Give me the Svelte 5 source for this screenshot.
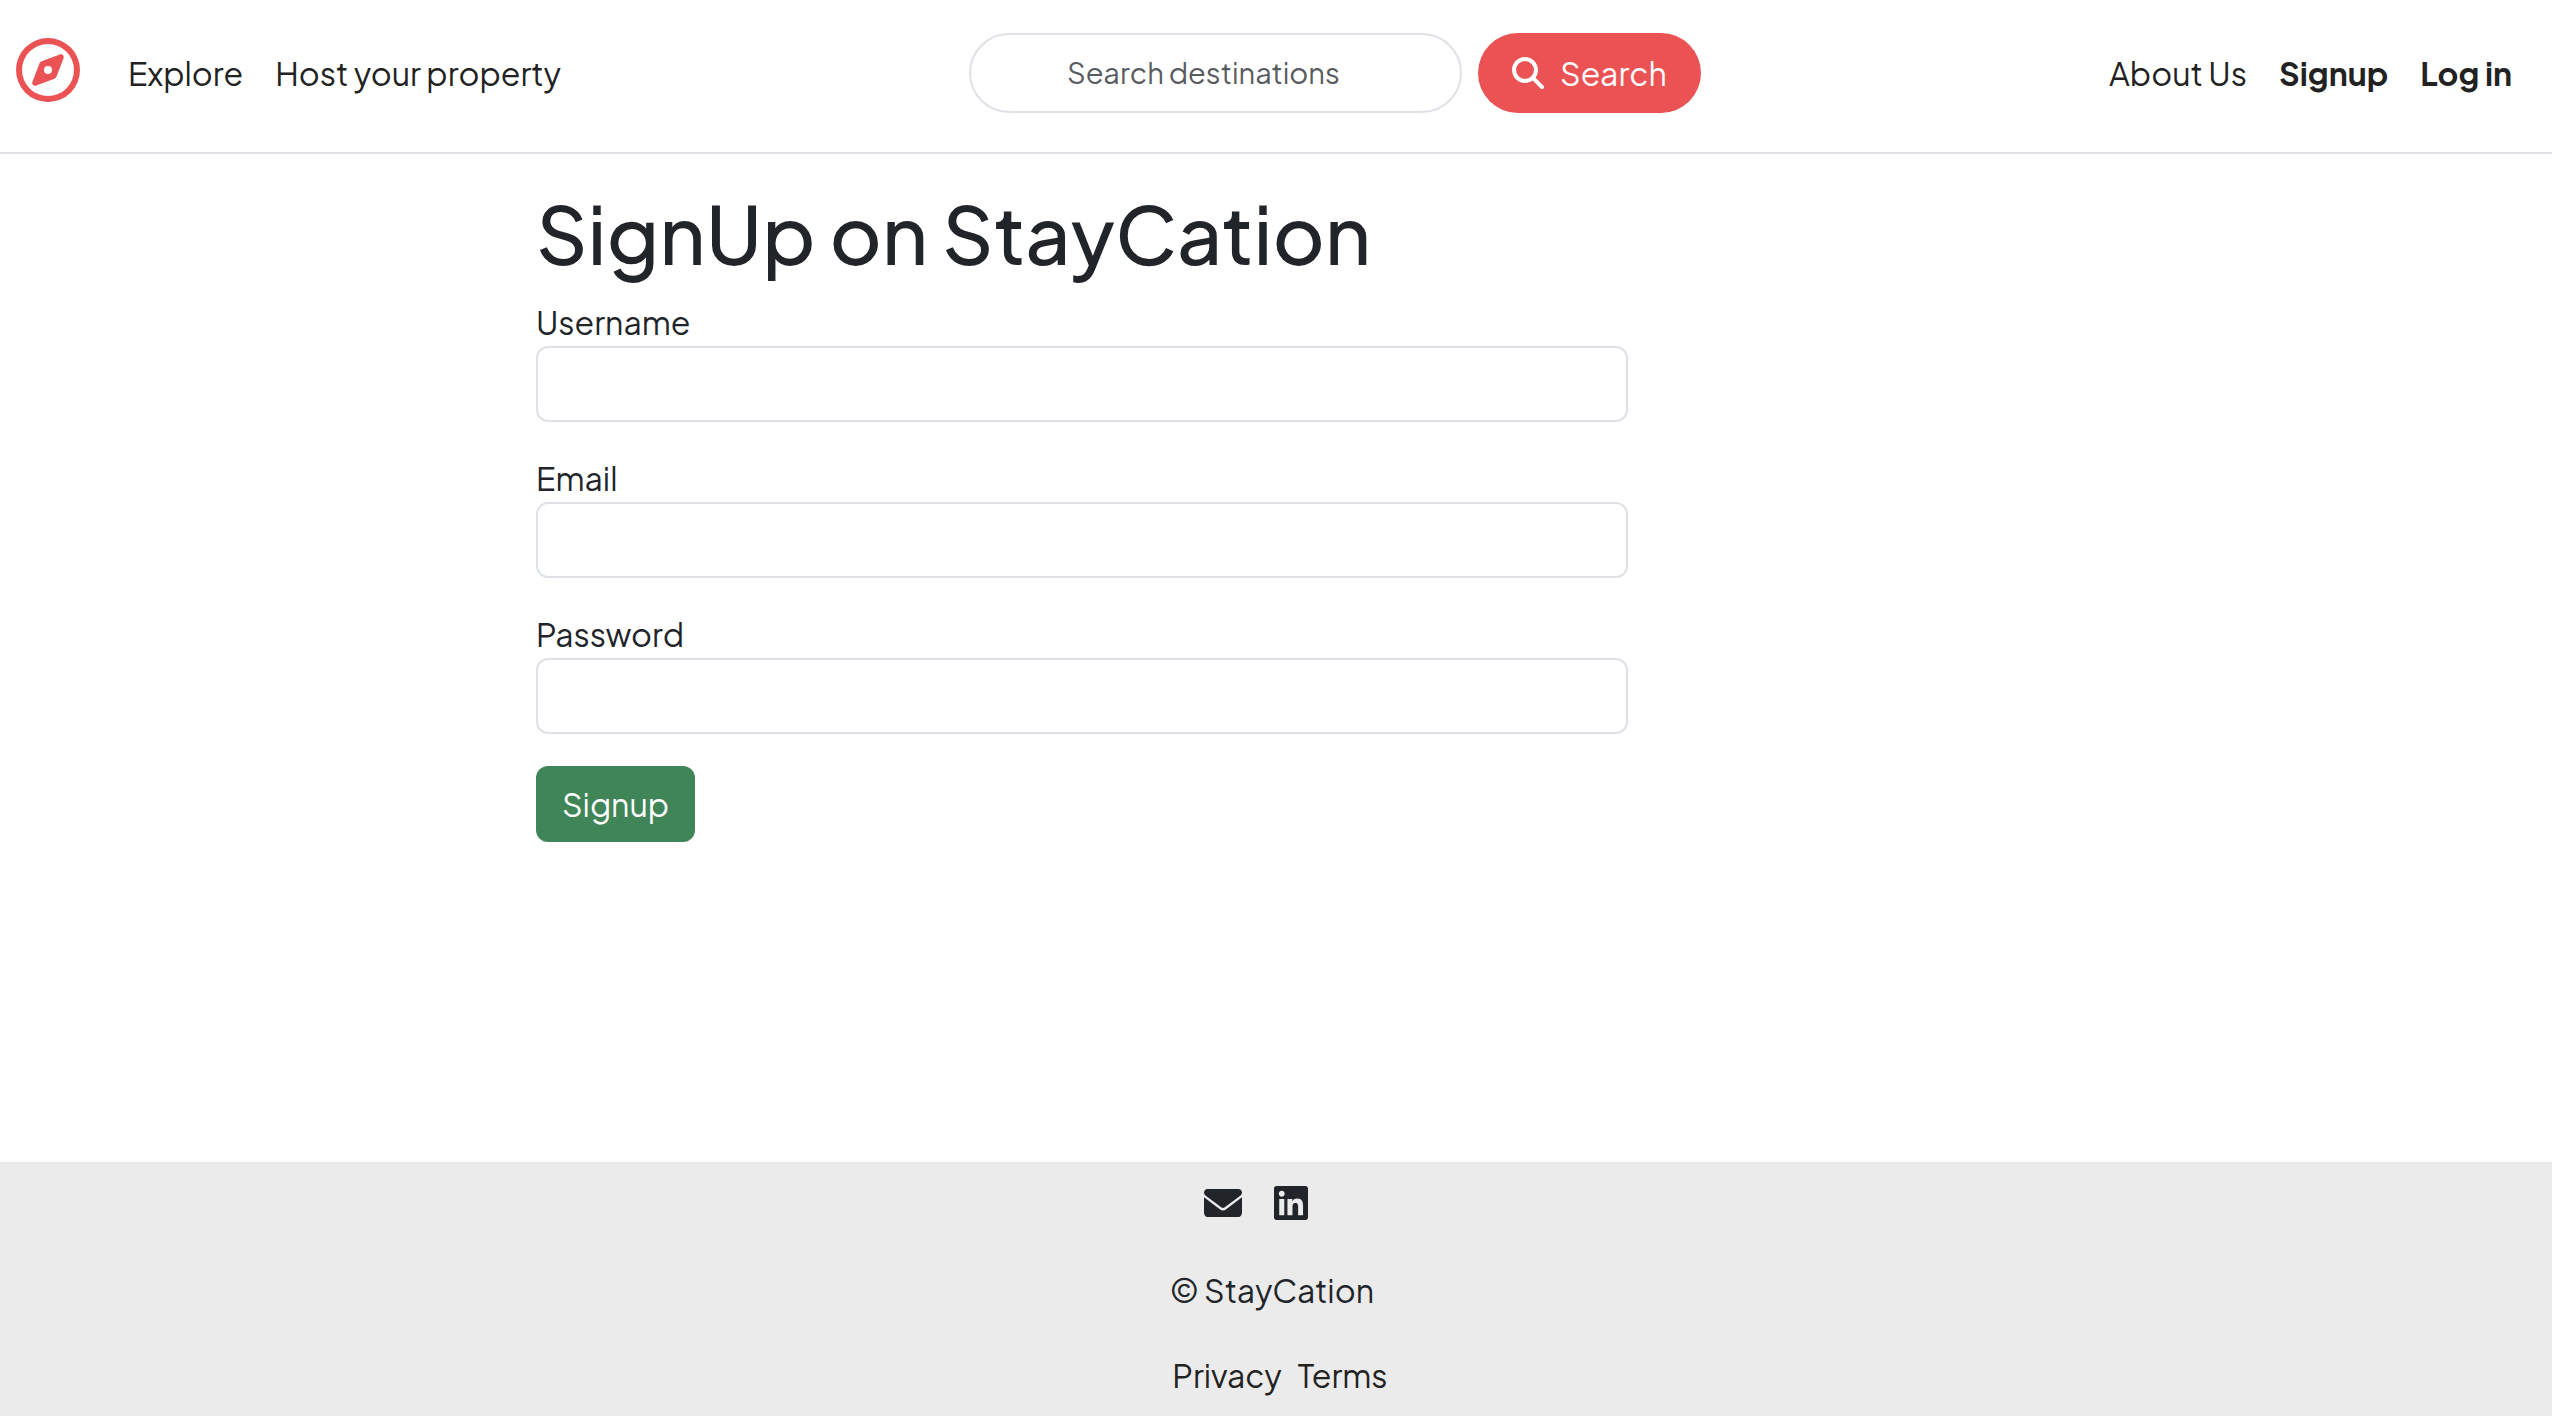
<script>
  const icons = {
    compass: 'M464 256A208 208 0 1 0 48 256a208 208 0 1 0 416 0zM0 256a256 256 0 1 1 512 0A256 256 0 1 1 0 256zm306.7 69.1L162.4 380.6c-19.4 7.5-38.5-11.6-31-31l55.5-144.3c3.3-8.5 9.9-15.1 18.4-18.4l144.3-55.5c19.4-7.5 38.5 11.6 31 31L325.1 306.7c-3.2 8.5-9.9 15.1-18.4 18.4zM288 256a32 32 0 1 0 -64 0 32 32 0 1 0 64 0z',
    search: 'M416 208c0 45.9-14.9 88.3-40 122.7L502.6 457.4c12.5 12.5 12.5 32.8 0 45.3s-32.8 12.5-45.3 0L330.7 376c-34.4 25.2-76.8 40-122.7 40C93.1 416 0 322.9 0 208S93.1 0 208 0S416 93.1 416 208zM208 352a144 144 0 1 0 0-288 144 144 0 1 0 0 288z',
    envelope: 'M48 64C21.5 64 0 85.5 0 112c0 15.1 7.1 29.3 19.2 38.4L236.8 313.6c11.4 8.5 27 8.5 38.4 0L492.8 150.4c12.1-9.1 19.2-23.3 19.2-38.4c0-26.5-21.5-48-48-48H48zM0 176V384c0 35.3 28.7 64 64 64H448c35.3 0 64-28.7 64-64V176L294.4 339.2c-22.8 17.1-54 17.1-76.8 0L0 176z',
    linkedin: 'M416 32H31.9C14.3 32 0 46.5 0 64.3v383.4C0 465.5 14.3 480 31.9 480H416c17.6 0 32-14.5 32-32.3V64.3c0-17.8-14.4-32.3-32-32.3zM135.4 416H69V202.2h66.5V416zm-33.2-243c-21.3 0-38.5-17.3-38.5-38.5S80.9 96 102.2 96c21.2 0 38.5 17.3 38.5 38.5 0 21.3-17.2 38.5-38.5 38.5zm282.1 243h-66.4V312c0-24.8-.5-56.7-34.5-56.7-34.6 0-39.9 27-39.9 54.9V416h-66.4V202.2h63.7v29.2h.9c8.9-16.8 30.6-34.5 62.2-34.5 66.5 0 78.9 43.8 78.9 100.9V416z'
  };

  const fields = [
    { id: 'username', label: 'Username', type: 'text' },
    { id: 'email', label: 'Email', type: 'email' },
    { id: 'password', label: 'Password', type: 'password' }
  ];

  let values = $state({ username: '', email: '', password: '' });
  let query = $state('');
</script>

<div class="page">
  <header>
    <a class="logo" href="/listings" aria-label="StayCation home">
      <svg viewBox="0 0 512 512" aria-hidden="true"><path d={icons.compass} /></svg>
    </a>
    <nav class="links primary">
      <a href="/listings">Explore</a>
      <a href="/listings/new">Host your property</a>
    </nav>
    <form class="search" role="search" onsubmit={(e) => e.preventDefault()}>
      <input type="search" placeholder="Search destinations" aria-label="Search destinations" bind:value={query} />
      <button type="submit">
        <svg viewBox="0 0 512 512" aria-hidden="true"><path d={icons.search} /></svg>
        <span>Search</span>
      </button>
    </form>
    <nav class="links">
      <a href="/about">About Us</a>
      <a class="strong" href="/signup">Signup</a>
      <a class="strong" href="/login">Log in</a>
    </nav>
  </header>

  <main>
    <h1>SignUp on StayCation</h1>
    <form class="signup" onsubmit={(e) => e.preventDefault()}>
      {#each fields as field (field.id)}
        <div class="field">
          <label for={field.id}>{field.label}</label>
          <input id={field.id} name={field.id} type={field.type} bind:value={values[field.id]} />
        </div>
      {/each}
      <button type="submit">Signup</button>
    </form>
  </main>

  <footer>
    <div class="social">
      <a href="mailto:hello@staycation.example" aria-label="Email">
        <svg class="envelope" viewBox="0 64 512 384" aria-hidden="true"><path d={icons.envelope} /></svg>
      </a>
      <a href="/linkedin" aria-label="LinkedIn">
        <svg class="linkedin" viewBox="0 32 448 448" aria-hidden="true"><path d={icons.linkedin} /></svg>
      </a>
    </div>
    <div class="copyright">© StayCation</div>
    <div class="legal">
      <a href="/privacy">Privacy</a>
      <a href="/terms">Terms</a>
    </div>
  </footer>
</div>

<style>
  :global(body) {
    margin: 0;
    background: #fff;
  }
  .page {
    display: flex;
    flex-direction: column;
    min-height: 100vh;
    font-family: 'Plus Jakarta Sans', Inter, 'Liberation Sans', sans-serif;
    font-size: 32px;
    line-height: 52px;
    color: #212529;
  }
  .page * {
    box-sizing: border-box;
  }
  a {
    color: #222;
    text-decoration: none;
    white-space: nowrap;
  }
  svg {
    display: block;
    fill: currentColor;
  }
  input,
  button {
    font: inherit;
    margin: 0;
  }
  button {
    border: 0;
    color: #fff;
    cursor: pointer;
  }
  input {
    min-width: 0;
    border: 2px solid #dee2e6;
    background: #fff;
    color: #212529;
  }

  header {
    display: flex;
    align-items: center;
    padding: 33px 40px 39px 16px;
    border-bottom: 2px solid #dee2e6;
  }
  .logo {
    padding-bottom: 6px;
    color: #eb5254;
  }
  .logo svg {
    width: 64px;
    height: 64px;
  }
  .links {
    display: flex;
    gap: 32px;
  }
  .primary {
    padding-left: 48px;
  }
  .strong {
    font-weight: 700;
  }
  .search {
    display: flex;
    gap: 16px;
    margin: 0 auto;
  }
  .search input {
    width: 493px;
    height: 80px;
    padding: 0 32px 2px 96px;
    border-radius: 40px;
    font-size: 29px;
    appearance: none;
  }
  .search input::placeholder {
    color: #595c5f;
    opacity: 1;
  }
  .search button {
    display: flex;
    align-items: center;
    gap: 16px;
    height: 80px;
    padding: 0 34px;
    border-radius: 40px;
    background: #eb5254;
  }
  .search svg {
    width: 32px;
    height: 32px;
  }

  main {
    flex: 1;
    padding: 28px 36.2% 48px 21%;
  }
  h1 {
    margin: 0 0 14px;
    font-size: 80px;
    font-weight: 500;
    line-height: 102px;
  }
  .field {
    display: flex;
    flex-direction: column;
    padding-bottom: 32px;
  }
  .field label {
    line-height: 48px;
  }
  .field input {
    width: 100%;
    height: 76px;
    padding: 0 24px;
    border-radius: 12px;
  }
  .signup button {
    height: 76px;
    padding: 0 26px;
    border-radius: 12px;
    background: #408558;
  }

  footer {
    display: flex;
    flex-direction: column;
    align-items: center;
    padding: 15px 0;
    background: #ebebeb;
  }
  .social {
    display: flex;
    align-items: center;
    gap: 32px;
    height: 52px;
    padding-right: 40px;
  }
  .social a {
    color: #212529;
  }
  .envelope {
    width: 38px;
  }
  .linkedin {
    width: 34px;
  }
  .copyright {
    padding: 35px 8px 33px 0;
  }
  .legal {
    display: flex;
    gap: 16px;
    padding-left: 8px;
  }
</style>
